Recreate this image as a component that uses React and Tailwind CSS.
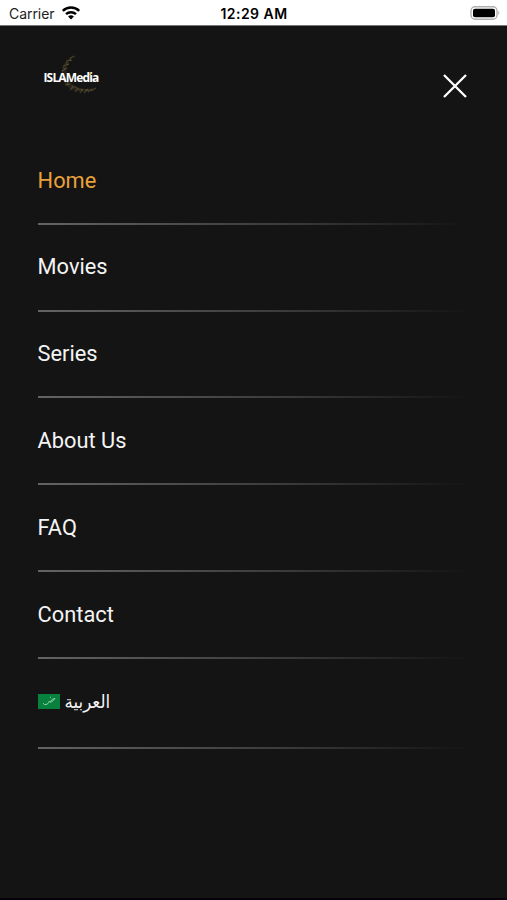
const links = ["Home", "Movies", "Series", "About Us", "FAQ", "Contact"];

const StatusBar = () => (
  <div className="grid h-[26px] shrink-0 grid-cols-3 items-center border-b border-[#777] bg-white pb-px pl-[9px] pr-[6px] font-['Inter','Liberation_Sans',sans-serif] text-black">
    <div className="flex items-center gap-[6px] pt-[3px]">
      <span className="text-[14px] leading-5 tracking-[-0.05px] text-[#222]">Carrier</span>
      <svg className="mb-[2px] h-[14px] w-[20px]" viewBox="0 0 20 14" fill="none" stroke="currentColor" strokeWidth="2.5">
        <path d="M1.8 4.8a11.8 11.8 0 0 1 16.4 0" />
        <path d="M5 8.2a7.3 7.3 0 0 1 10 0" />
        <path d="M10 13.5 7.1 10.6a4.2 4.2 0 0 1 5.8 0z" fill="currentColor" stroke="none" />
      </svg>
    </div>
    <span className="-ml-[2px] whitespace-nowrap pt-[4px] text-center text-[14px] font-semibold leading-5 tracking-[0.45px]">12:29 AM</span>
    <svg className="mt-[2px] h-[14px] w-[31px] justify-self-end" viewBox="0 0 31 14">
      <rect x="1" y="0.8" width="26" height="12.4" rx="4" fill="#fff" stroke="#b0b0b0" strokeWidth="1.4" />
      <rect x="3" y="2.8" width="22" height="8.4" rx="2" fill="#000" />
      <path d="M28.4 4.8q2 2.2 0 4.4z" fill="#aaa" />
    </svg>
  </div>
);

const Logo = () => (
  <div className="relative h-[44px] w-[66px]">
    <svg className="absolute inset-0 h-full w-full" viewBox="0 0 66 44" fill="none" stroke="#8f7c45">
      <path d="M37 2C26 7 20 18 26 29c5 9 18 13 32 6-10 2-20 1-26-6C25 20 29 9 37 2z" fill="#8f7c45" stroke="none" opacity="0.16" />
      <path d="M37 3l-5 2M34 7l-6 1M31 11l-6 2M29 15l-5 3M28 27l-4 0M32 31l-5 1M35 34l-3 3M40 35l-3 4M45 36l-3 4M50 36l-4 4M54 36l-4 3M58 35l-5 3" strokeWidth="1.1" opacity="0.4" />
      <path d="M32 5l1 3M28 9l2 3M25 14l2 2M29 29l1 3M34 33l5 2M40 36l5 1M47 37l4 0" strokeWidth="0.9" opacity="0.4" />
    </svg>
    <span className="absolute left-[5.5px] top-[17px] font-['Open_Sans','Noto_Sans',sans-serif] text-[12px] font-bold leading-4 tracking-[-0.85px] text-white">
      ISLAMedia
    </span>
    <span className="absolute left-[51px] top-[20px] h-[2px] w-[2px] bg-[#d0a238]" />
  </div>
);

const Divider = () => (
  <div className="h-[2px] w-full bg-gradient-to-r from-[#646464] via-[#393939] via-60% to-[#141414]" />
);

const App = () => (
  <div className="flex h-[900px] w-[507px] flex-col overflow-hidden border-b-2 border-[#08000a] bg-[#141414] font-['Roboto',sans-serif]">
    <StatusBar />
    <header className="flex h-[112px] shrink-0 items-start justify-between pl-[38px] pr-[39px] pt-[27px]">
      <Logo />
      <button aria-label="Close menu" className="mt-[20px]">
        <svg className="h-[26px] w-[26px]" viewBox="0 0 26 26" stroke="#fff" strokeWidth="2.3">
          <path d="M2 2l22 22M24 2 2 24" />
        </svg>
      </button>
    </header>
    <nav className="px-[37.6px]">
      {links.map((link) => (
        <a key={link} href="#" className="flex h-[86.8px] flex-col">
          <span className={`flex flex-1 items-center pt-px text-[21.8px] ${link === "Home" ? "text-[#e9a13b]" : "text-[#f4f4f4]"}`}>
            {link}
          </span>
          <Divider />
        </a>
      ))}
      <a href="#" className="flex h-[90px] flex-col">
        <span className="flex flex-1 items-center gap-[5px] pb-[2px]">
          <svg className="h-[15px] w-[22px]" viewBox="0 0 22 15">
            <rect width="22" height="15" fill="#08813f" />
            <path d="M5 9.2q1 2.3 4 1 2-1 2.2-3 .5 1.5 2 .8 3-2 3.7-3.4-2.6-.4-4.4 3M12 3.4l1-.4" fill="none" stroke="#8ed3a4" strokeWidth="1" />
          </svg>
          <span lang="ar" dir="rtl" className="font-['DejaVu_Sans_Condensed','DejaVu_Sans',sans-serif] text-[18.5px] leading-6 text-[#f4f4f4] [font-stretch:condensed]">
            العربية
          </span>
        </span>
        <Divider />
      </a>
    </nav>
  </div>
);

export default App;
